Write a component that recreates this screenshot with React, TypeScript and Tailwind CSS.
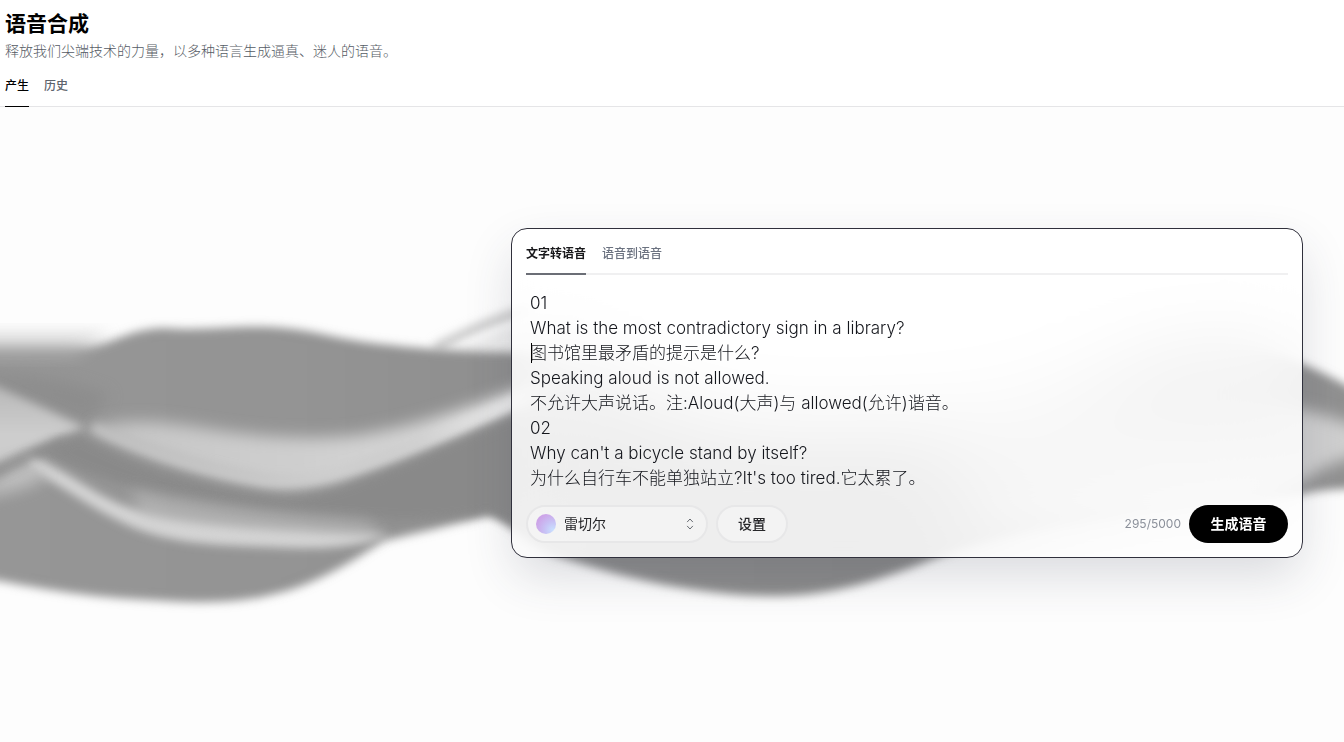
import { useState } from "react";

const SAMPLE_TEXT = `01
What is the most contradictory sign in a library?
图书馆里最矛盾的提示是什么?
Speaking aloud is not allowed.
不允许大声说话。注:Aloud(大声)与 allowed(允许)谐音。
02
Why can't a bicycle stand by itself?
为什么自行车不能单独站立?It's too tired.它太累了。`;

function Waves() {
  return (
    <svg
      aria-hidden="true"
      className="pointer-events-none absolute inset-0 h-full w-full"
      viewBox="0 107 1344 635"
      preserveAspectRatio="xMidYMin slice"
    >
      <defs>
        <filter id="soft" x="-10%" y="-20%" width="120%" height="140%">
          <feGaussianBlur stdDeviation="5" />
        </filter>
        <filter id="softer" x="-20%" y="-50%" width="140%" height="200%">
          <feGaussianBlur stdDeviation="8" />
        </filter>
        <linearGradient id="body" x1="0" x2="1" y1="0" y2="0">
          <stop offset="0" stopColor="#969696" />
          <stop offset="0.25" stopColor="#939393" />
          <stop offset="0.4" stopColor="#8e8e8e" />
          <stop offset="0.75" stopColor="#888888" />
          <stop offset="1" stopColor="#929292" />
        </linearGradient>
        <linearGradient id="wedge" x1="0" x2="0" y1="0" y2="1">
          <stop offset="0" stopColor="#b4b4b4" />
          <stop offset="0.6" stopColor="#cecece" />
          <stop offset="1" stopColor="#c8c8c8" />
        </linearGradient>
        <linearGradient id="ribbon" gradientUnits="userSpaceOnUse" x1="90" x2="530" y1="0" y2="0">
          <stop offset="0" stopColor="#c4c4c4" />
          <stop offset="0.35" stopColor="#cccccc" />
          <stop offset="0.75" stopColor="#d4d4d4" />
          <stop offset="1" stopColor="#f2f2f2" />
        </linearGradient>
      </defs>

      <path
        filter="url(#soft)"
        fill="none"
        stroke="#c6c6c6"
        strokeWidth="9"
        d="M435 348 C460 336 485 322 530 309"
      />
      <path filter="url(#soft)" fill="#ececec" d="M455 350 C480 338 500 328 540 320 V352Z" />

      <path
        filter="url(#soft)"
        fill="url(#body)"
        d="M-30 346 H85 C115 345 125 329 165 328 C205 331 225 326 270 327 C315 329 335 340 390 345 C430 350 470 351 520 352
           C600 362 640 408 740 424 C900 440 1040 410 1120 372 C1160 352 1200 346 1240 348 C1280 352 1310 366 1344 384 L1380 404 V488
           C1330 489 1320 490 1303 494 C1190 510 1030 520 940 556 C880 581 830 596 775 596 C700 596 620 578 555 555
           C520 540 503 516 487 516 C450 525 410 535 383 541 C340 570 305 588 270 595 C235 604 190 603 150 600 C90 597 50 591 -30 575Z"
      />
      <path filter="url(#softer)" fill="#bcbcbc" d="M-30 334 H110 L75 356 H-30Z" opacity="0.6" />
      <path filter="url(#softer)" fill="#858585" opacity="0.5" d="M-20 372 C30 372 70 380 110 395 L90 420 C50 410 20 395 -20 382Z" />

      <path filter="url(#soft)" fill="url(#wedge)" d="M-30 376 C20 396 50 412 86 428 C60 435 30 448 -30 476Z" />

      <path
        filter="url(#softer)"
        fill="url(#ribbon)"
        d="M92 428 C120 420 150 420 190 426 C250 436 310 442 365 434 C420 424 465 410 560 374 L560 392
           C480 428 420 450 365 470 C330 487 300 490 265 484 C205 473 145 454 92 428Z"
      />
      <path
        filter="url(#soft)"
        fill="none"
        stroke="url(#ribbon)"
        strokeWidth="10"
        d="M92 427 C145 452 205 472 265 481 C330 488 420 446 540 390"
      />
      <path
        filter="url(#soft)"
        fill="#888888"
        opacity="0.85"
        d="M78 435 C130 462 200 490 285 498 C350 494 430 452 520 412 V528 L488 512 C420 526 300 518 190 498 C130 490 85 474 45 454Z"
      />

      <path
        filter="url(#soft)"
        fill="#d6d6d6"
        d="M28 456 C65 468 90 494 130 508 C175 522 250 528 390 534 C350 550 310 549 270 547 C210 545 170 543 130 526 C90 508 65 487 28 468Z"
      />
      <path filter="url(#softer)" fill="#c4c4c4" opacity="0.6" d="M130 490 C190 506 270 516 370 522 L380 538 C290 536 190 530 140 516Z" />
      <path filter="url(#softer)" fill="#c4c4c4" opacity="0.9" d="M-20 488 C0 478 12 462 30 460 L48 476 C30 488 10 492 -20 498Z" />
      <path filter="url(#soft)" fill="none" stroke="#858585" strokeWidth="7" opacity="0.7" d="M-20 480 C10 466 30 456 65 440" />

      <path
        filter="url(#softer)"
        fill="#cfcfcf"
        d="M920 450 C1010 415 1130 400 1200 402 C1260 400 1300 404 1380 434 V452 C1340 458 1320 468 1303 482 C1180 505 1050 505 990 510Z"
      />
    </svg>
  );
}

function PageTabs() {
  return (
    <nav aria-label="页面" className="flex gap-[15px] border-b border-[#e5e5e7] pl-[5px] text-xs leading-4 font-medium">
      <button type="button" className="-mb-px border-b border-black pb-3 text-black">
        产生
      </button>
      <button type="button" className="-mb-px border-b border-transparent pb-3 text-[#5d636d]">
        历史
      </button>
    </nav>
  );
}

function SpeechCard() {
  const [text, setText] = useState(SAMPLE_TEXT);

  return (
    <section className="relative mt-[121px] mr-[41px] ml-4 w-full max-w-[792px] rounded-2xl border border-[#30303c] bg-white/85 px-3.5 pb-3.5 shadow-[0_20px_50px_-4px_rgba(50,55,75,0.18)] backdrop-blur-2xl">
      <div className="flex h-[46px] gap-4 border-b-2 border-[#f0f0f1] text-xs font-medium">
        <button type="button" className="-mb-0.5 border-b-2 border-[#6b6e76] pt-1.5 font-bold text-[#18181b]">
          文字转语音
        </button>
        <button type="button" className="-mb-0.5 border-b-2 border-transparent pt-1.5 text-[#6b7280]">
          语音到语音
        </button>
      </div>

      <div className="relative pt-4">
        <textarea
          aria-label="文本"
          value={text}
          onChange={(e) => setText(e.target.value)}
          rows={8}
          spellCheck={false}
          className="block w-full resize-none overflow-hidden bg-transparent px-1 text-[17px] leading-[25px] font-light text-[#14161c] outline-none"
        />
        <span aria-hidden="true" className="absolute top-[68px] left-[5px] h-5 w-px bg-black" />
      </div>

      <div className="mt-3.5 flex items-center gap-2">
        <div className="relative flex h-[38px] w-[182px] items-center rounded-full border-2 border-[#e7e7e8] bg-white/30">
          <span
            aria-hidden="true"
            className="pointer-events-none absolute left-2 size-5 rounded-full bg-[radial-gradient(circle_at_85%_80%,#c9e0ff_0%,#c8c2f5_35%,#cda4e8_75%)]"
          />
          <select aria-label="声音" className="h-full w-full appearance-none rounded-full bg-transparent pl-9 text-sm text-[#27272a] outline-none">
            <option>雷切尔</option>
          </select>
          <svg
            aria-hidden="true"
            viewBox="0 0 10 14"
            className="pointer-events-none absolute right-[11px] h-3.5 w-2.5 fill-none stroke-[#666a70]"
            strokeLinecap="round"
            strokeLinejoin="round"
          >
            <path d="M2.4 4.8 5 2 7.6 4.8M2.4 9.2 5 12l2.6-2.8" />
          </svg>
        </div>
        <button type="button" className="h-[38px] w-[72px] rounded-full border-2 border-[#e7e7e8] bg-white/30 text-sm font-medium text-[#27272a]">
          设置
        </button>
        <span className="ml-auto text-xs text-[#8b909a]">295/5000</span>
        <button type="button" className="h-[38px] w-[99px] rounded-full bg-black text-sm font-bold text-white">
          生成语音
        </button>
      </div>
    </section>
  );
}

export default function App() {
  return (
    <div className="flex min-h-screen flex-col bg-white font-['Inter','Noto_Sans_CJK_SC',sans-serif]">
      <header className="pt-2.5">
        <h1 className="pl-[5px] text-[21px] leading-7 font-bold text-black">语音合成</h1>
        <p className="mb-[15px] pl-[5px] text-sm leading-[25px] font-light text-[#555b64]">
          释放我们尖端技术的力量，以多种语言生成逼真、迷人的语音。
        </p>
        <PageTabs />
      </header>
      <main className="relative flex flex-1 items-start justify-end overflow-hidden bg-[#fdfdfd]">
        <Waves />
        <SpeechCard />
      </main>
    </div>
  );
}
